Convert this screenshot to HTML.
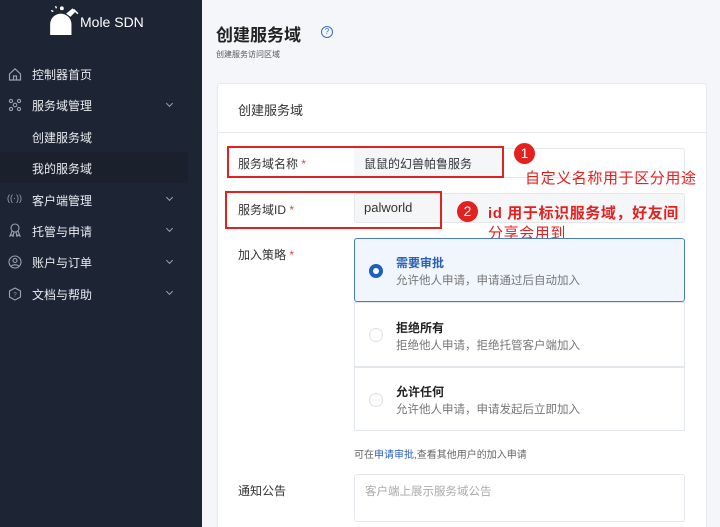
<!DOCTYPE html>
<html style="overflow:hidden;height:527px"><head><meta charset="utf-8"><style>
*{margin:0;padding:0;box-sizing:border-box}
body{width:720px;height:527px;overflow:hidden;background:#f4f6f9;font-family:"Liberation Sans","Noto Sans CJK SC",sans-serif;position:relative}
.a{position:absolute;white-space:nowrap}
#sb{position:absolute;left:0;top:0;width:202px;height:527px;background:#1d2433}
.mi{position:absolute;left:32px;color:#e8ebef;font-size:12px}
.ic{position:absolute;left:8px;width:14px;height:14px}
.ar{position:absolute;left:167px;width:5px;height:5px;border-right:1.3px solid #9aa3b0;border-bottom:1.3px solid #9aa3b0;transform:rotate(45deg)}
.inp{position:absolute;left:354px;width:331px;border:1px solid #e3e6eb;border-radius:3px;background:#f5f6f8}
.lab{font-size:12px;color:#333}
.st{color:#e0463f}
.red{border:2px solid #e3211f;position:absolute}
.circ{position:absolute;width:21px;height:21px;border-radius:50%;background:#e3211f;color:#fff;font-size:14px;text-align:center;line-height:21px}
.rt{color:#e3211f;font-size:15px;letter-spacing:0.6px}
.opt{position:absolute;left:354px;width:331px;border:1px solid #e3e6eb;background:#fff}
.rad{position:absolute;left:14px;width:14px;height:14px;border-radius:50%;border:1px solid #dde1e6}
.ot{position:absolute;left:41px;font-size:12px;font-weight:bold;color:#222}
.od{position:absolute;left:41px;font-size:11.5px;color:#777}
</style></head><body>
<div id="sb">
 <svg class="a" style="left:48px;top:3px" width="32" height="32" viewBox="0 0 30 30"><path d="M2 30V20a10 10 0 0 1 20 0v10z" fill="#fff"/><path d="M17 10l6-5 3 3-5 5z" fill="#fff"/><path d="M24 6l4 4" stroke="#fff" stroke-width="1.5"/><circle cx="13" cy="5" r="1.8" fill="#fff"/><path d="M3 7l2 1M7 3l1 2" stroke="#fff" stroke-width="1.3"/></svg>
 <div class="a" style="left:80px;top:14px;color:#fff;font-size:14px">Mole SDN</div>
 <div class="a" style="left:0;top:152px;width:188px;height:31px;background:#1a202c"></div>
 <svg class="ic" style="top:67px" viewBox="0 0 14 14" fill="none" stroke="#9aa3b0" stroke-width="1.2"><path d="M1.5 7L7 1.8 12.5 7V13h-11z M5.5 13V9h3v4"/></svg>
 <div class="mi" style="top:66px">控制器首页</div>
 <svg class="ic" style="top:98px" viewBox="0 0 14 14" fill="none" stroke="#9aa3b0" stroke-width="1.1"><circle cx="7" cy="7" r="1.8"/><circle cx="3" cy="3" r="1.6"/><circle cx="11" cy="3" r="1.6"/><circle cx="3" cy="11" r="1.6"/><circle cx="11" cy="11" r="1.6"/></svg>
 <div class="mi" style="top:97px">服务域管理</div><div class="ar" style="top:101px"></div>
 <div class="mi" style="top:129px">创建服务域</div>
 <div class="mi" style="top:160px">我的服务域</div>
 <div class="a" style="left:7px;top:193px;color:#9aa3b0;font-size:9px">((·))</div>
 <div class="mi" style="top:192px">客户端管理</div><div class="ar" style="top:195px"></div>
 <svg class="ic" style="top:223px" viewBox="0 0 14 14" fill="none" stroke="#9aa3b0" stroke-width="1.1"><circle cx="7" cy="5" r="4"/><path d="M4 8l-2 5 2-1 1 1.5L6 9M10 8l2 5-2-1-1 1.5L8 9"/></svg>
 <div class="mi" style="top:223px">托管与申请</div><div class="ar" style="top:226px"></div>
 <svg class="ic" style="top:255px" viewBox="0 0 14 14" fill="none" stroke="#9aa3b0" stroke-width="1.1"><circle cx="7" cy="7" r="6"/><circle cx="7" cy="5.5" r="2"/><path d="M3.3 11.3c1-2 6.4-2 7.4 0"/></svg>
 <div class="mi" style="top:254px">账户与订单</div><div class="ar" style="top:258px"></div>
 <svg class="ic" style="top:287px" viewBox="0 0 14 14" fill="none" stroke="#9aa3b0" stroke-width="1.1"><path d="M7 1l5.5 3v6L7 13 1.5 10V4z"/><text x="7" y="9.5" font-size="6" fill="#9aa3b0" stroke="none" text-anchor="middle">?</text></svg>
 <div class="mi" style="top:286px">文档与帮助</div><div class="ar" style="top:289px"></div>
</div>
<div class="a" style="left:216px;top:21px;font-size:17px;font-weight:bold;color:#222">创建服务域</div>
<div class="a" style="left:321px;top:26px;width:12px;height:12px;border:1.2px solid #3a6fc0;border-radius:50%;color:#3a6fc0;font-size:8px;text-align:center;line-height:10px">?</div>
<div class="a" style="left:216px;top:49px;font-size:8px;color:#555">创建服务访问区域</div>
<div class="a" style="left:217px;top:83px;width:490px;height:444px;background:#fff;border:1px solid #e6e9ee;border-bottom:none;border-radius:3px 3px 0 0"></div>
<div class="a" style="left:217px;top:132px;width:490px;height:1px;background:#e6e9ee"></div>
<div class="a" style="left:238px;top:100px;font-size:13px;color:#333">创建服务域</div>

<div class="inp" style="top:148px;height:30px;background:#fff"></div>
<div class="a" style="left:354px;top:148px;width:150px;height:30px;background:#f5f6f8"></div>
<div class="a" style="left:364px;top:155px;font-size:12px;color:#333">鼠鼠的幻兽帕鲁服务</div>
<div class="a lab" style="left:238px;top:155px">服务域名称 <span class="st">*</span></div>
<div class="red" style="left:227px;top:146px;width:277px;height:32px"></div>
<div class="circ" style="left:514px;top:143px">1</div>
<div class="a rt" style="left:525px;top:167px">自定义名称用于区分用途</div>

<div class="inp" style="top:193px;height:30px"></div>
<div class="a" style="left:364px;top:200px;font-size:13px;color:#333">palworld</div>
<div class="a lab" style="left:238px;top:201px">服务域ID <span class="st">*</span></div>
<div class="red" style="left:225px;top:191px;width:217px;height:38px"></div>
<div class="circ" style="left:457px;top:201px">2</div>
<div class="a rt" style="left:488px;top:202px;font-weight:bold">id 用于标识服务域，好友间</div>
<div class="a rt" style="left:488px;top:222px">分享会用到</div>

<div class="a lab" style="left:238px;top:246px">加入策略 <span class="st">*</span></div>
<div class="opt" style="top:238px;height:64px;background:#f1f5fc;border-color:#4a7cc4;border-radius:3px"><div class="rad" style="top:25px;border:4px solid #1f5fbf;background:#fff"></div><div class="ot" style="top:15px;color:#2a62b8">需要审批</div><div class="od" style="top:33px">允许他人申请，申请通过后自动加入</div></div>
<div class="opt" style="top:302px;height:65px"><div class="rad" style="top:25px"></div><div class="ot" style="top:16px">拒绝所有</div><div class="od" style="top:34px">拒绝他人申请，拒绝托管客户端加入</div></div>
<div class="opt" style="top:367px;height:64px"><div class="rad" style="top:25px"></div><div class="ot" style="top:15px">允许任何</div><div class="od" style="top:33px">允许他人申请，申请发起后立即加入</div></div>
<div class="a" style="left:354px;top:446px;font-size:10px;color:#666">可在<span style="color:#2a62b8">申请审批</span>,查看其他用户的加入申请</div>
<div class="a lab" style="left:238px;top:482px">通知公告</div>
<div class="inp" style="top:474px;height:48px;background:#fff"></div>
<div class="a" style="left:365px;top:483px;font-size:11.5px;color:#aaa">客户端上展示服务域公告</div>
</body></html>
